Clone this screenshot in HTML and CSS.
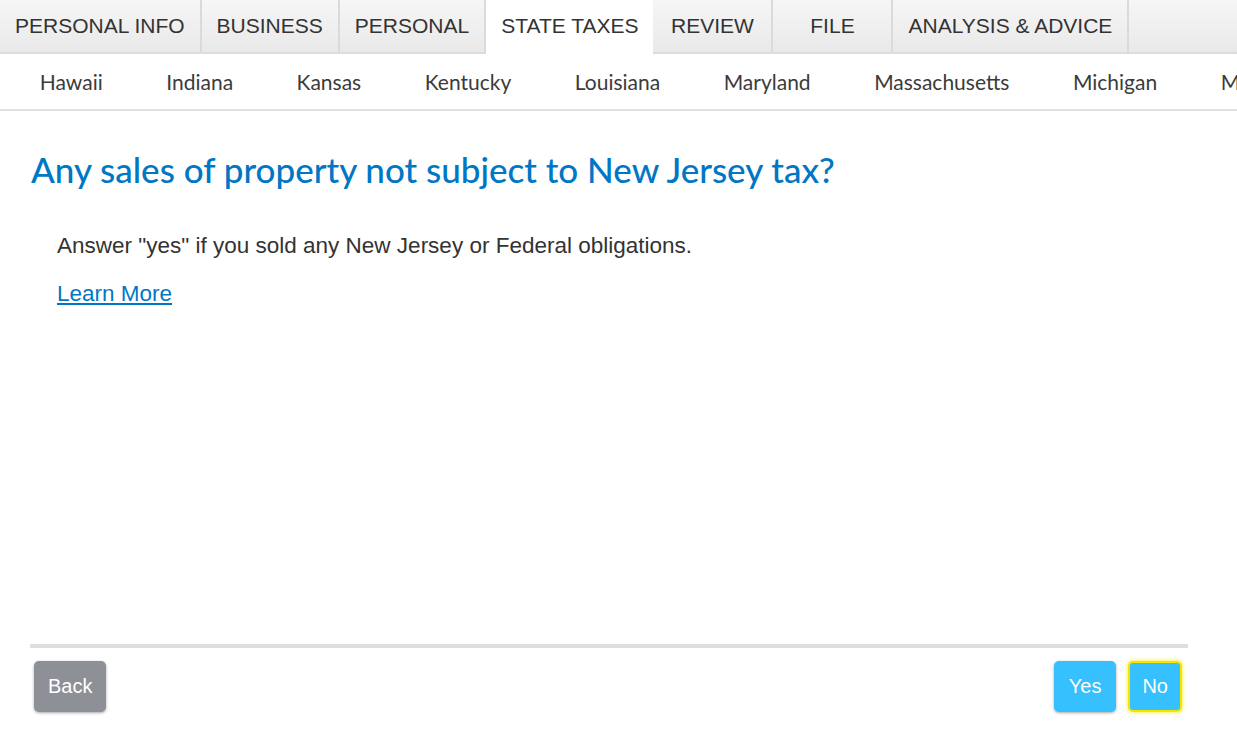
FILE: index.html
```html
<!DOCTYPE html>
<html>
<head>
<meta charset="utf-8">
<link rel="stylesheet" href="styles.css">
</head>
<body>
<nav class="tabs">
  <div class="tab">PERSONAL INFO</div>
  <div class="tab">BUSINESS</div>
  <div class="tab">PERSONAL</div>
  <div class="tab active">STATE TAXES</div>
  <div class="tab">REVIEW</div>
  <div class="tab">FILE</div>
  <div class="tab">ANALYSIS &amp; ADVICE</div>
  <div class="tab-fill"></div>
</nav>
<nav class="subnav">
  <span class="state">Hawaii</span>
  <span class="state">Indiana</span>
  <span class="state">Kansas</span>
  <span class="state">Kentucky</span>
  <span class="state">Louisiana</span>
  <span class="state">Maryland</span>
  <span class="state">Massachusetts</span>
  <span class="state">Michigan</span>
  <span class="state">Minnesota</span>
</nav>
<main class="content">
  <h1 class="title">Any sales of property not subject to New Jersey tax?</h1>
  <p class="desc">Answer "yes" if you sold any New Jersey or Federal obligations.</p>
  <a class="learn" href="#">Learn More</a>
</main>
<footer class="footer">
  <div class="rule"></div>
  <div class="actions">
    <button class="btn back">Back</button>
    <div class="answers">
      <button class="btn blue">Yes</button>
      <button class="btn blue focus">No</button>
    </div>
  </div>
</footer>
</body>
</html>
```
FILE: styles.css
```css
html, body {
  margin: 0;
  padding: 0;
  background: #fff;
  width: 1237px;
  height: 733px;
  overflow: hidden;
}
body {
  font-family: "Liberation Sans", Arial, sans-serif;
  color: #333;
  display: flex;
  flex-direction: column;
}
.tabs {
  display: flex;
  height: 52px;
  border-bottom: 2px solid #dcdcdc;
  background: linear-gradient(#f6f6f6, #e9e9e9);
}
.tab {
  min-width: 120px;
  padding: 0 15px;
  box-sizing: border-box;
  display: flex;
  align-items: center;
  justify-content: center;
  font-size: 21px;
  color: #333;
  border-right: 2px solid #dadada;
  white-space: nowrap;
}
.tab.active {
  background: #fff;
  border-right: none;
  margin-bottom: -2px;
  padding-bottom: 2px;
}
.tab-fill { flex: 1; }
.subnav {
  display: flex;
  height: 55px;
  align-items: center;
  padding-left: 8px;
  border-bottom: 2px solid #e0e0e0;
  white-space: nowrap;
  overflow: hidden;
}
.state {
  font-family: Lato, "Open Sans", sans-serif;
  font-size: 21px;
  color: #3b3b3b;
  padding: 0 31.75px;
}
.content {
  flex: 1;
  padding: 0 31px;
}
.title {
  font-family: Lato, "Open Sans", sans-serif;
  font-weight: 500;
  font-size: 35px;
  color: #0077c5;
  margin: 37px 0 0;
}
.desc {
  font-size: 22.5px;
  color: #333;
  margin: 43px 0 0 26px;
}
.learn {
  display: inline-block;
  font-size: 22.5px;
  color: #0077c5;
  margin: 22px 0 0 26px;
}
.footer {
  padding: 0 49px 21px 30px;
}
.rule {
  height: 4px;
  background: #dedede;
}
.actions {
  display: flex;
  justify-content: space-between;
  align-items: center;
  margin-top: 13px;
  padding: 0 6px 0 4px;
}
.answers {
  display: flex;
  gap: 12px;
}
.btn {
  font-family: "Liberation Sans", Arial, sans-serif;
  font-size: 20px;
  color: #fff;
  border: none;
  border-radius: 5px;
  height: 51px;
  padding: 0 14px;
  box-shadow: 0 1px 3px rgba(0,0,0,0.35);
}
.back { background: #8d9096; }
.blue { background: #36c0fd; padding: 0 15px; }
.focus {
  border: 2px solid #f5e400;
  box-shadow: 0 0 4px #ffe900;
  padding: 0 12px;
}
```
